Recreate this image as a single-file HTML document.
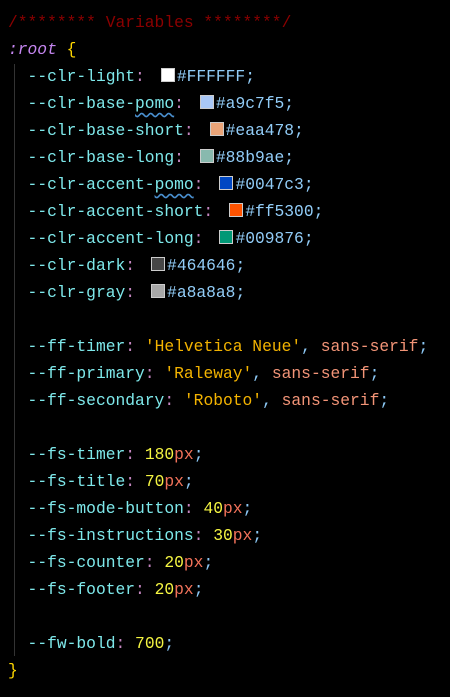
<!DOCTYPE html><html><head><style>
body{margin:0;background:#000;width:450px;height:697px;overflow:hidden;font-family:"Liberation Mono",monospace;font-size:16.3px;}
.c{position:absolute;left:8px;top:9px;white-space:pre;line-height:27px}
.guide{position:absolute;left:14px;top:64px;width:1px;height:592px;background:#333}
.cm{color:#8b0000}.sel{color:#c586f0;font-style:italic}.br{color:#ffd700}
.p{color:#7ee8ea}.co{color:#c586c0}.v{color:#92cdf8}.s{color:#f3b300}.k{color:#f29477}.n{color:#f5f542}.u{color:#f2725a}.sc{color:#8cc8f5}
.sw{display:inline-block;width:12px;height:12px;border:1px solid #ccc;margin:0 2px 0 16px;vertical-align:-1px}
.wv{text-decoration:underline wavy #4a90d0;text-underline-offset:4px}
</style></head><body><div class="guide"></div><div class="c"><span class="cm">/******** Variables ********/</span>
<span class="sel">:root</span> <span class="br">{</span>
  <span class="p">--clr-light</span><span class="co">:</span><span class="sw" style="background:#fff"></span><span class="v">#FFFFFF;</span>
  <span class="p">--clr-base-<span class="wv">pomo</span></span><span class="co">:</span><span class="sw" style="background:#a9c7f5"></span><span class="v">#a9c7f5;</span>
  <span class="p">--clr-base-short</span><span class="co">:</span><span class="sw" style="background:#eaa478"></span><span class="v">#eaa478;</span>
  <span class="p">--clr-base-long</span><span class="co">:</span><span class="sw" style="background:#88b9ae"></span><span class="v">#88b9ae;</span>
  <span class="p">--clr-accent-<span class="wv">pomo</span></span><span class="co">:</span><span class="sw" style="background:#0047c3"></span><span class="v">#0047c3;</span>
  <span class="p">--clr-accent-short</span><span class="co">:</span><span class="sw" style="background:#ff5300"></span><span class="v">#ff5300;</span>
  <span class="p">--clr-accent-long</span><span class="co">:</span><span class="sw" style="background:#009876"></span><span class="v">#009876;</span>
  <span class="p">--clr-dark</span><span class="co">:</span><span class="sw" style="background:#464646"></span><span class="v">#464646;</span>
  <span class="p">--clr-gray</span><span class="co">:</span><span class="sw" style="background:#a8a8a8"></span><span class="v">#a8a8a8;</span>

  <span class="p">--ff-timer</span><span class="co">:</span> <span class="s">'Helvetica Neue'</span><span class="sc">,</span> <span class="k">sans-serif</span><span class="sc">;</span>
  <span class="p">--ff-primary</span><span class="co">:</span> <span class="s">'Raleway'</span><span class="sc">,</span> <span class="k">sans-serif</span><span class="sc">;</span>
  <span class="p">--ff-secondary</span><span class="co">:</span> <span class="s">'Roboto'</span><span class="sc">,</span> <span class="k">sans-serif</span><span class="sc">;</span>

  <span class="p">--fs-timer</span><span class="co">:</span> <span class="n">180</span><span class="u">px</span><span class="sc">;</span>
  <span class="p">--fs-title</span><span class="co">:</span> <span class="n">70</span><span class="u">px</span><span class="sc">;</span>
  <span class="p">--fs-mode-button</span><span class="co">:</span> <span class="n">40</span><span class="u">px</span><span class="sc">;</span>
  <span class="p">--fs-instructions</span><span class="co">:</span> <span class="n">30</span><span class="u">px</span><span class="sc">;</span>
  <span class="p">--fs-counter</span><span class="co">:</span> <span class="n">20</span><span class="u">px</span><span class="sc">;</span>
  <span class="p">--fs-footer</span><span class="co">:</span> <span class="n">20</span><span class="u">px</span><span class="sc">;</span>

  <span class="p">--fw-bold</span><span class="co">:</span> <span class="n">700</span><span class="sc">;</span>
<span class="br">}</span></div></body></html>
